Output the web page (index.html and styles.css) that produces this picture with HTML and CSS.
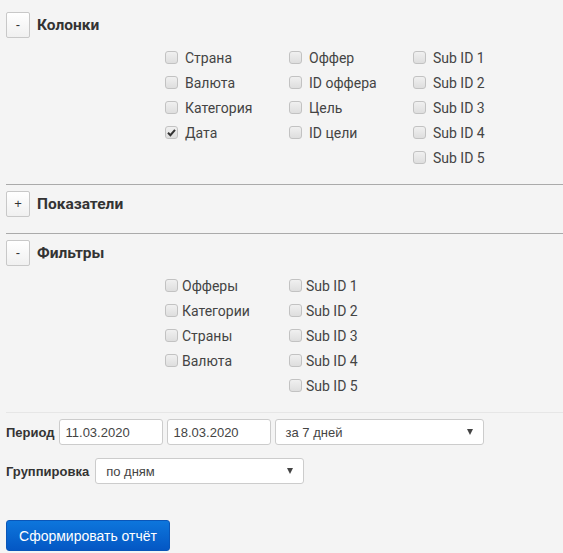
FILE: index.html
```html
<!DOCTYPE html>
<html lang="ru">
<head>
<meta charset="utf-8">
<link rel="stylesheet" href="styles.css">
</head>
<body>
<div class="page">
  <section class="section sec-cols">
    <div class="sec-head"><button class="toggle">-</button><span class="sec-title">Колонки</span></div>
    <div class="checks checks-cols">
      <div class="col">
        <label class="chk"><span class="box"></span>Страна</label>
        <label class="chk"><span class="box"></span>Валюта</label>
        <label class="chk"><span class="box"></span>Категория</label>
        <label class="chk"><span class="box checked"><svg viewBox="0 0 13 13" width="13" height="13"><path d="M3 6.8 L5.4 9.2 L10 3.8" fill="none" stroke="#333" stroke-width="2"/></svg></span>Дата</label>
      </div>
      <div class="col">
        <label class="chk"><span class="box"></span>Оффер</label>
        <label class="chk"><span class="box"></span>ID оффера</label>
        <label class="chk"><span class="box"></span>Цель</label>
        <label class="chk"><span class="box"></span>ID цели</label>
      </div>
      <div class="col">
        <label class="chk"><span class="box"></span>Sub ID 1</label>
        <label class="chk"><span class="box"></span>Sub ID 2</label>
        <label class="chk"><span class="box"></span>Sub ID 3</label>
        <label class="chk"><span class="box"></span>Sub ID 4</label>
        <label class="chk"><span class="box"></span>Sub ID 5</label>
      </div>
    </div>
  </section>
  <section class="section sec-metrics">
    <div class="sec-head"><button class="toggle">+</button><span class="sec-title">Показатели</span></div>
  </section>
  <section class="section sec-filters">
    <div class="sec-head"><button class="toggle">-</button><span class="sec-title">Фильтры</span></div>
    <div class="checks checks-filters">
      <div class="col">
        <label class="chk"><span class="box"></span>Офферы</label>
        <label class="chk"><span class="box"></span>Категории</label>
        <label class="chk"><span class="box"></span>Страны</label>
        <label class="chk"><span class="box"></span>Валюта</label>
      </div>
      <div class="col">
        <label class="chk"><span class="box"></span>Sub ID 1</label>
        <label class="chk"><span class="box"></span>Sub ID 2</label>
        <label class="chk"><span class="box"></span>Sub ID 3</label>
        <label class="chk"><span class="box"></span>Sub ID 4</label>
        <label class="chk"><span class="box"></span>Sub ID 5</label>
      </div>
    </div>
  </section>
  <div class="form">
    <div class="form-row">
      <span class="form-label">Период</span>
      <div class="field date">11.03.2020</div>
      <div class="field date">18.03.2020</div>
      <div class="field select sel-period"><span>за 7 дней</span><span class="arrow"></span></div>
    </div>
    <div class="form-row">
      <span class="form-label">Группировка</span>
      <div class="field select sel-group"><span>по дням</span><span class="arrow"></span></div>
    </div>
    <button class="submit">Сформировать отчёт</button>
  </div>
</div>
</body>
</html>
```
FILE: styles.css
```css
html, body {
  margin: 0;
  padding: 0;
  background: #f4f4f4;
}
.page {
  padding: 0 0 0 6px;
  font-family: Roboto, "Liberation Sans", Arial, sans-serif;
  color: #333;
}
.section {
  border-bottom: 1px solid #aaaaaa;
}
.sec-cols {
  padding: 12px 0 14px;
}
.sec-metrics {
  padding: 6px 0 16px;
}
.sec-filters {
  padding: 6px 0 14px;
  border-bottom-color: #e6e6e6;
}
.sec-head {
  display: flex;
  align-items: center;
  gap: 7px;
}
.toggle {
  width: 24px;
  height: 26px;
  padding: 0;
  margin: 0;
  border: 1px solid #c8c8c8;
  border-radius: 2px;
  background: linear-gradient(#ffffff, #f0f0f0);
  font-family: "Liberation Sans", Arial, sans-serif;
  font-size: 13px;
  color: #333;
  line-height: 24px;
}
.sec-title {
  font-weight: bold;
  font-size: 15.5px;
  color: #333;
}
.checks {
  display: flex;
  margin-left: 159px;
  margin-top: 7px;
}
.checks-cols .col,
.checks-filters .col {
  width: 124px;
}
.col {
  display: flex;
  flex-direction: column;
}
.chk {
  display: flex;
  align-items: center;
  height: 25px;
  font-size: 14px;
  color: #444;
}
.checks-cols .box {
  margin-right: 7px;
}
.checks-filters .box {
  margin-right: 4px;
}
.box {
  width: 13px;
  height: 13px;
  box-sizing: border-box;
  border: 1px solid #c2c2c2;
  border-radius: 3px;
  background: linear-gradient(#f0f0f0, #dedede);
  display: inline-flex;
  flex: none;
}
.box svg {
  margin: -1px;
}
.form {
  padding-top: 6px;
  font-family: "Liberation Sans", Arial, sans-serif;
}
.form-row {
  display: flex;
  align-items: center;
  gap: 4px;
  margin-bottom: 13px;
}
.form-label {
  font-weight: bold;
  font-size: 13px;
  color: #333;
}
.field {
  height: 26px;
  box-sizing: border-box;
  border: 1px solid #cccccc;
  border-radius: 3px;
  background: #ffffff;
  font-size: 13px;
  color: #444;
  display: flex;
  align-items: center;
  padding: 0 6px;
}
.date {
  width: 104px;
}
.select {
  justify-content: space-between;
  padding: 0 10px;
}
.sel-period {
  width: 209px;
}
.sel-group {
  width: 209px;
  margin-left: 2px;
}
.arrow {
  width: 0;
  height: 0;
  border-left: 3.5px solid transparent;
  border-right: 3.5px solid transparent;
  border-top: 6px solid #444;
}
.submit {
  margin-top: 23px;
  width: 164px;
  height: 31px;
  border: 1px solid #0a56b8;
  border-radius: 3px;
  background: linear-gradient(#0d76dc, #0457c4);
  color: #fff;
  font-family: "Liberation Sans", Arial, sans-serif;
  font-size: 14px;
  padding: 0;
}
```
